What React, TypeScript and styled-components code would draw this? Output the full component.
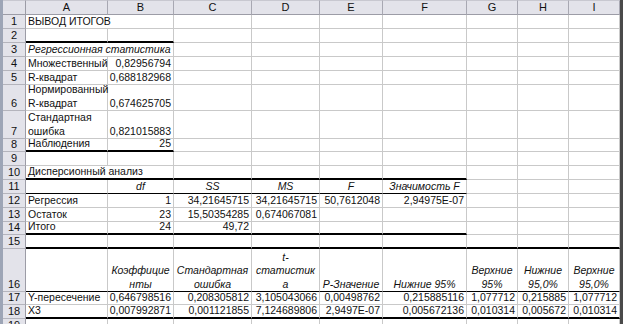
import styled, { createGlobalStyle } from 'styled-components';

const GlobalStyle = createGlobalStyle`
  html, body { margin: 0; padding: 0; background: #fff; }
  body { font-family: "Liberation Sans", Arial, sans-serif; }
`;

type Align = 'l' | 'r' | 'c';
type Edge = 'thick' | 'thin' | 'none';
interface Cell { t: string; a?: Align; i?: boolean; span?: number }

const widths = [82, 66, 78, 68, 63, 84, 51, 51, 51];
const letters = ['A', 'B', 'C', 'D', 'E', 'F', 'G', 'H', 'I'];

const L = (t: string, span?: number): Cell => ({ t, a: 'l', span });
const R = (t: string): Cell => ({ t, a: 'r' });
const I = (t: string): Cell => ({ t, a: 'c', i: true });
const E: Cell = { t: '' };

const rows: { h: number; cells: Cell[] }[] = [
  { h: 14, cells: [L('ВЫВОД ИТОГОВ', 2), E, E, E, E, E, E, E] },
  { h: 14, cells: [E, E, E, E, E, E, E, E, E] },
  { h: 14, cells: [{ t: 'Регрессионная статистика', a: 'l', i: true, span: 2 }, E, E, E, E, E, E, E] },
  { h: 14, cells: [L('Множественный'), R('0,82956794'), E, E, E, E, E, E, E] },
  { h: 14, cells: [L('R-квадрат'), R('0,688182968'), E, E, E, E, E, E, E] },
  { h: 26, cells: [L('Нормированный\nR-квадрат'), R('0,674625705'), E, E, E, E, E, E, E] },
  { h: 28, cells: [L('Стандартная\nошибка'), R('0,821015883'), E, E, E, E, E, E, E] },
  { h: 13, cells: [L('Наблюдения'), R('25'), E, E, E, E, E, E, E] },
  { h: 14, cells: [E, E, E, E, E, E, E, E, E] },
  { h: 14, cells: [L('Дисперсионный анализ', 2), E, E, E, E, E, E, E] },
  { h: 14, cells: [E, I('df'), I('SS'), I('MS'), I('F'), I('Значимость F'), E, E, E] },
  { h: 14, cells: [L('Регрессия'), R('1'), R('34,21645715'), R('34,21645715'), R('50,7612048'), R('2,94975E-07'), E, E, E] },
  { h: 14, cells: [L('Остаток'), R('23'), R('15,50354285'), R('0,674067081'), E, E, E, E, E] },
  { h: 13, cells: [L('Итого'), R('24'), R('49,72'), E, E, E, E, E, E] },
  { h: 14, cells: [E, E, E, E, E, E, E, E, E] },
  {
    h: 43,
    cells: [E, I('Коэффицие\nнты'), I('Стандартная\nошибка'), I('t-\nстатистик\nа'), I('P-Значение'),
      I('Нижние 95%'), I('Верхние\n95%'), I('Нижние\n95,0%'), I('Верхние\n95,0%')],
  },
  {
    h: 13,
    cells: [L('Y-пересечение'), R('0,646798516'), R('0,208305812'), R('3,105043066'), R('0,00498762'),
      R('0,215885116'), R('1,077712'), R('0,215885'), R('1,077712')],
  },
  {
    h: 14,
    cells: [L('X3'), R('0,007992871'), R('0,001121855'), R('7,124689806'), R('2,9497E-07'),
      R('0,005672136'), R('0,010314'), R('0,005672'), R('0,010314')],
  },
  { h: 14, cells: [E, E, E, E, E, E, E, E, E] },
];

// bottom borders drawn under a row: [kind, last column index]
const edges: Record<number, [Edge, number]> = {
  2: ['thick', 1],
  8: ['thick', 1],
  10: ['thick', 5],
  11: ['thin', 5],
  14: ['thick', 5],
  15: ['thick', 8],
  16: ['thin', 8],
  18: ['thick', 8],
};

const Window = styled.div`
  width: 623px;
  height: 324px;
  overflow: hidden;
  box-sizing: border-box;
  border-left: 3px solid #9da5b6;
  border-right: 3px solid #4a4a4a;
  background: #fff;
`;

const Sheet = styled.div<{ $rows: string }>`
  display: grid;
  grid-template-columns: 23px ${widths.map((w) => w + 'px').join(' ')};
  grid-template-rows: 15px ${(p) => p.$rows};
  font-size: 10.5px;
  color: #111;
`;

const Corner = styled.div`
  background: #e3e3ea;
  border-right: 1px solid #9c9ca6;
  border-bottom: 1px solid #9c9ca6;
  border-top: 1px solid #c8c8d0;
  box-sizing: border-box;
`;

const ColHead = styled.div`
  background: #e3e3ea;
  border-right: 1px solid #a8a8b2;
  border-bottom: 1px solid #9c9ca6;
  border-top: 1px solid #c8c8d0;
  box-sizing: border-box;
  display: flex;
  align-items: center;
  justify-content: center;
  line-height: 13px;
  font-size: 11px;
`;

const RowHead = styled.div`
  background: #e3e3ea;
  border-right: 1px solid #9c9ca6;
  border-bottom: 1px solid #b4b4bc;
  box-sizing: border-box;
  display: flex;
  align-items: flex-end;
  justify-content: center;
  line-height: 13px;
  font-size: 11px;
`;

const Data = styled.div<{ $a: Align; $i: boolean; $edge: Edge; $span: number }>`
  grid-column: span ${(p) => p.$span};
  box-sizing: border-box;
  border-right: 1px solid #c9c9c9;
  border-bottom: ${(p) =>
    p.$edge === 'thick' ? '2px solid #000' : p.$edge === 'thin' ? '1px solid #000' : '1px solid #c9c9c9'};
  padding: 0 2px 0 2px;
  display: flex;
  align-items: flex-end;
  justify-content: ${(p) => (p.$a === 'r' ? 'flex-end' : p.$a === 'c' ? 'center' : 'flex-start')};
  text-align: ${(p) => (p.$a === 'r' ? 'right' : p.$a === 'c' ? 'center' : 'left')};
  font-style: ${(p) => (p.$i ? 'italic' : 'normal')};
  white-space: pre;
  line-height: 13.5px;
  overflow: visible;
`;

export default function App() {
  return (
    <>
      <GlobalStyle />
      <Window>
        <Sheet $rows={rows.map((r) => r.h + 'px').join(' ')}>
          <Corner />
          {letters.map((l) => (
            <ColHead key={l}>{l}</ColHead>
          ))}
          {rows.map((row, ri) => {
            const n = ri + 1;
            const edge = edges[n];
            let col = 0;
            return [
              <RowHead key={'h' + n}>{n}</RowHead>,
              ...row.cells.map((c, ci) => {
                const span = c.span ?? 1;
                const kind: Edge = edge && col <= edge[1] ? edge[0] : 'none';
                col += span;
                return (
                  <Data key={n + '-' + ci} $a={c.a ?? 'l'} $i={!!c.i} $edge={kind} $span={span}>
                    {c.t}
                  </Data>
                );
              }),
            ];
          })}
        </Sheet>
      </Window>
    </>
  );
}
